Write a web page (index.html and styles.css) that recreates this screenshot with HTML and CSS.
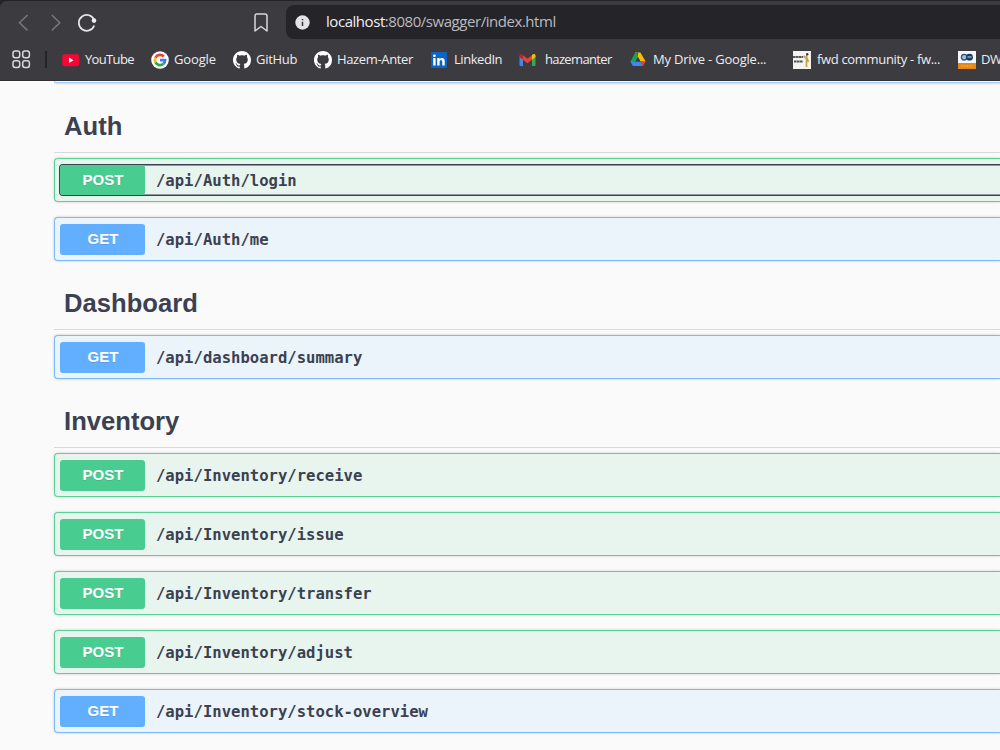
FILE: index.html
```html
<!DOCTYPE html>
<html lang="en">
<head>
<meta charset="utf-8">
<title>Swagger UI</title>
<link rel="stylesheet" href="styles.css">
</head>
<body>
<svg width="0" height="0" class="defs">
  <symbol id="github" viewBox="0 0 16 16"><path d="M8 0C3.58 0 0 3.58 0 8c0 3.54 2.29 6.53 5.47 7.59.4.07.55-.17.55-.38 0-.19-.01-.82-.01-1.49-2.01.37-2.53-.49-2.69-.94-.09-.23-.48-.94-.82-1.13-.28-.15-.68-.52-.01-.53.63-.01 1.08.58 1.23.82.72 1.21 1.87.87 2.33.66.07-.52.28-.87.51-1.07-1.78-.2-3.64-.89-3.64-3.95 0-.87.31-1.59.82-2.15-.08-.2-.36-1.02.08-2.12 0 0 .67-.21 2.2.82.64-.18 1.32-.27 2-.27s1.36.09 2 .27c1.53-1.04 2.2-.82 2.2-.82.44 1.1.16 1.92.08 2.12.51.56.82 1.27.82 2.15 0 3.07-1.87 3.75-3.65 3.95.29.25.54.73.54 1.48 0 1.07-.01 1.93-.01 2.2 0 .21.15.46.55.38A8.01 8.01 0 0 0 16 8c0-4.42-3.58-8-8-8z" fill="#fff"/></symbol>
</svg>
<header class="browser">
  <div class="toolbar">
    <svg class="nav-icons" width="110" height="44" viewBox="0 0 110 44" fill="none" stroke-width="1.5">
      <path d="M27.5 15L19.5 22.7L27.5 30.4M51.8 15L59.8 22.7L51.8 30.4" stroke="#77767b"/>
      <path d="M94.2 20.3A7.9 7.9 0 1 0 94.2 25.4" stroke="#e8e7eb" stroke-width="1.7"/>
      <circle cx="94" cy="20.6" r="2.3" fill="#eeedf0"/>
    </svg>
    <svg class="bookmark" width="16" height="22" viewBox="0 0 16 22"><path d="M2 4.2Q2 2 4 2H12Q14 2 14 4.2V19L8 14.5L2 19Z" fill="none" stroke="#d8d7dc" stroke-width="1.5" stroke-linejoin="round"/></svg>
    <div class="address">
      <svg width="15" height="15" viewBox="0 0 15 15"><circle cx="7.5" cy="7.5" r="7.2" fill="#e4e3e8"/><path d="M7.5 6.7V11M7.5 3.9V5.3" stroke="#333237" stroke-width="1.5"/></svg>
      <span class="url"><span class="host">localhost</span>:8080/swagger/index.html</span>
    </div>
  </div>
  <nav class="bookmarks">
    <svg class="apps" width="19" height="19" viewBox="0 0 19 19" fill="none" stroke="#dad9dd" stroke-width="1.5"><rect x="1" y="1" width="6.7" height="6.7" rx="2.2"/><rect x="10.7" y="1" width="6.7" height="6.7" rx="2.2"/><rect x="1" y="10.7" width="6.7" height="6.7" rx="2.2"/><rect x="10.7" y="10.7" width="6.7" height="6.7" rx="2.2"/></svg>
    <span class="divider"></span>
    <a class="mark youtube"><svg width="18" height="18" viewBox="0 0 18 18"><rect x=".3" y="3.2" width="17" height="12" rx="2.6" fill="#f60633"/><path d="M7 6.5L11.4 9.2L7 11.9Z" fill="#fff"/></svg><span>YouTube</span></a>
    <a class="mark google"><svg width="18" height="18" viewBox="0 0 18 18"><circle cx="9" cy="9" r="8.8" fill="#fff"/><g fill="none" stroke-width="2.7"><path d="M4.5 6.6A5.1 5.1 0 0 1 12.8 5.6" stroke="#ee4437"/><path d="M4.5 6.6A5.1 5.1 0 0 0 4.5 11.4" stroke="#f9b91a"/><path d="M4.5 11.4A5.1 5.1 0 0 0 12.5 12.8" stroke="#2ea850"/><path d="M12.5 12.8A5.1 5.1 0 0 0 14.1 9.2H9" stroke="#397fee"/></g></svg><span>Google</span></a>
    <a class="mark github"><svg width="18" height="18"><use href="#github"/></svg><span>GitHub</span></a>
    <a class="mark hazem"><svg width="18" height="18"><use href="#github"/></svg><span>Hazem-Anter</span></a>
    <a class="mark linkedin"><svg width="16" height="16" viewBox="0 0 16 16"><rect width="16" height="16" rx="1" fill="#0b65c2"/><circle cx="3.4" cy="3.8" r="1.4" fill="#fff"/><path d="M2.2 6.1H4.6V13.5H2.2ZM6.2 6.1H8.5V7.2Q9.3 5.9 10.9 5.9Q13.7 5.9 13.7 9.2V13.5H11.3V9.7Q11.3 8 10 8Q8.6 8 8.6 9.8V13.5H6.2Z" fill="#fff"/></svg><span>LinkedIn</span></a>
    <a class="mark gmail"><svg width="17" height="14" viewBox="0 0 17 14"><path d="M.5 3V12Q.5 13 1.5 13H4V6Z" fill="#4285f4"/><path d="M13 6V13H15.5Q16.5 13 16.5 12V3Z" fill="#34a853"/><path d="M4 2.2L8.5 5.7L13 2.2V6.8L8.5 10.2L4 6.8Z" fill="#ea4335"/><path d="M.5 4V2.5C.5.8 2.4.5 3.4 1.5L4 2V6.7Z" fill="#c5221f"/><path d="M16.5 4V2.5C16.5.8 14.6.5 13.6 1.5L13 2V6.7Z" fill="#fbbc04"/></svg><span>hazemanter</span></a>
    <a class="mark drive"><svg width="16" height="15" viewBox="0 0 16 15"><path d="M5.3.5H8L8 5.2L3 14L.5 9.6Z" fill="#15a35a"/><path d="M5.3.5H10.4L15.6 9.6H10.5Z" fill="#fbbc04"/><path d="M.5 9.6H10.5L13 14H3Z" fill="#4285f4"/><path d="M10.5 9.6H15.6L13 14Z" fill="#ea4335"/><path d="M8 5.2L10.5 9.6H5.4Z" fill="#3c3b40"/><path d="M5.3.5H8L8 5.2Z" fill="#188038"/></svg><span>My Drive - Google...</span></a>
    <a class="mark fwd"><svg width="18" height="18" viewBox="0 0 18 18"><path fill="#f4f3ee" d="M0 0H18V18H0Z"/><path d="M0 6H10M1 10.5H10" stroke="#56565a" stroke-width="1.8" stroke-dasharray="2.4 .4"/><path d="M14 3L13.5 7V16M13 7L10.5 5M14 7L15.5 11" stroke="#c9a14e" stroke-width="1.7" fill="none"/><circle cx="14.2" cy="3.2" r="1.2" fill="#443c32"/></svg><span>fwd community - fw...</span></a>
    <a class="mark dw"><svg width="18" height="18" viewBox="0 0 18 18"><path fill="#f7f7f7" d="M0 0H18V12H0Z"/><path fill="#e98716" d="M0 12H18V18H0Z"/><circle cx="6.2" cy="6.2" r="2.8" fill="#a4bfd4" stroke="#315882" stroke-width="1.3"/><circle cx="11.5" cy="6.2" r="3.4" fill="#183c69"/><path d="M9.5 6H13.5" stroke="#d9e3ec"/><path d="M3 15H15" stroke="#f1b168" stroke-dasharray="1 .5"/></svg><span>DW</span></a>
  </nav>
</header>
<main class="swagger">
  <div class="previous get"></div>
  <section>
    <h3>Auth</h3>
    <div class="op post focused"><div class="summary"><span class="method">POST</span><span class="path">/api/Auth/login</span></div></div>
    <div class="op get"><div class="summary"><span class="method">GET</span><span class="path">/api/Auth/me</span></div></div>
  </section>
  <section>
    <h3>Dashboard</h3>
    <div class="op get"><div class="summary"><span class="method">GET</span><span class="path">/api/dashboard/summary</span></div></div>
  </section>
  <section>
    <h3>Inventory</h3>
    <div class="op post"><div class="summary"><span class="method">POST</span><span class="path">/api/Inventory/receive</span></div></div>
    <div class="op post"><div class="summary"><span class="method">POST</span><span class="path">/api/Inventory/issue</span></div></div>
    <div class="op post"><div class="summary"><span class="method">POST</span><span class="path">/api/Inventory/transfer</span></div></div>
    <div class="op post"><div class="summary"><span class="method">POST</span><span class="path">/api/Inventory/adjust</span></div></div>
    <div class="op get"><div class="summary"><span class="method">GET</span><span class="path">/api/Inventory/stock-overview</span></div></div>
  </section>
</main>
</body>
</html>
```

FILE: styles.css
```css
* { box-sizing: border-box; }
body { margin: 0; width: 1000px; height: 750px; overflow: hidden; background: #fafafa; color: #3b4151; font-family: "Liberation Sans", Arial, sans-serif; }
.defs { display: block; }
.browser { height: 81px; background: #3c3b40; border-top: 1px solid #242329; border-bottom: 1px solid #302f34; border-top-left-radius: 7px; box-shadow: -8px -8px 0 #242329; color: #eeedf0; font-family: "Open Sans", "Noto Sans", sans-serif; }
.toolbar { display: flex; height: 38px; }
.nav-icons { margin-top: -1px; flex: none; }
.bookmark { margin: 11px 0 0 143px; flex: none; }
.address { flex: 1; display: flex; align-items: center; height: 34px; margin: 4px 0 0 17px; padding-left: 9px; gap: 16px; background: #252429; border-radius: 8px 0 0 8px; }
.address svg { flex: none; }
.url { padding-bottom: 2px; color: #bcbbc0; font-size: 15px; letter-spacing: -.45px; white-space: nowrap; line-height: 20px; }
.host { color: #f0eff3; }
.bookmarks { display: flex; align-items: center; height: 41px; padding-left: 12px; white-space: nowrap; font-size: 13px; line-height: 18px; }
.apps { flex: none; }
.divider { flex: none; width: 2px; height: 17px; margin: 0 15px 0 14px; background: #242328; }
.mark { flex: none; display: flex; align-items: center; gap: 5px; }
.mark svg { flex: none; }
.mark span { padding-bottom: 2px; }
.youtube { width: 89px; letter-spacing: -.65px; }
.google { width: 82px; letter-spacing: -.15px; }
.github { width: 81px; letter-spacing: -.3px; }
.hazem { width: 117px; letter-spacing: -.35px; }
.linkedin { width: 88px; gap: 7px; letter-spacing: -.45px; }
.gmail { width: 111px; gap: 9px; letter-spacing: -.65px; }
.drive { width: 163px; gap: 7px; letter-spacing: -.2px; }
.fwd { width: 165px; gap: 6px; letter-spacing: -.33px; }
.dw { letter-spacing: -.5px; }
.swagger { padding-left: 53.6px; }
.previous { height: 2px; border: 1px solid; border-top: 0; border-right: 0; border-radius: 0 0 0 4px; box-shadow: 0 1px 2px rgba(0,0,0,.12); }
h3 { display: flex; align-items: center; height: 53.5px; margin: 0 0 5.55px; padding: 1.2px 0 0 10.5px; font-size: 25.6px; line-height: 30px; border-bottom: 1px solid #d8d9dc; }
section:first-of-type { padding-top: 16.4px; }
.op { height: 43.4px; margin-bottom: 15.6px; padding: 5px 0 0 4.4px; border: 1px solid; border-right: 0; border-radius: 4px 0 0 4px; box-shadow: 0 0 3px rgba(0,0,0,.19); }
.op.post { border-color: #5bd099; background: #e7f5ee; }
.op.get { border-color: #7bb9fb; background: #ebf3fb; }
.previous.get { border-color: #9acafa; }
.summary { display: flex; align-items: center; height: 32px; border: 1px solid transparent; border-right: 0; border-radius: 4px 0 0 4px; }
.focused .summary { border-color: #3b4151; box-shadow: inset 0 1px #8d98a0, inset 0 -1px #8d98a0; }
.method { flex: none; width: 85px; height: 31px; padding-left: 1px; border-radius: 3px; color: #fff; font-size: 15px; font-weight: 700; line-height: 30px; text-align: center; text-shadow: 0 1px 0 rgba(0,0,0,.1); }
.focused .method { height: 30px; line-height: 29px; }
.post .method { background: #49cc90; }
.get .method { background: #61affe; }
.path { padding: 1px 0 0 11px; font: 700 15.58px/20px "DejaVu Sans Mono", monospace; white-space: nowrap; }
```
